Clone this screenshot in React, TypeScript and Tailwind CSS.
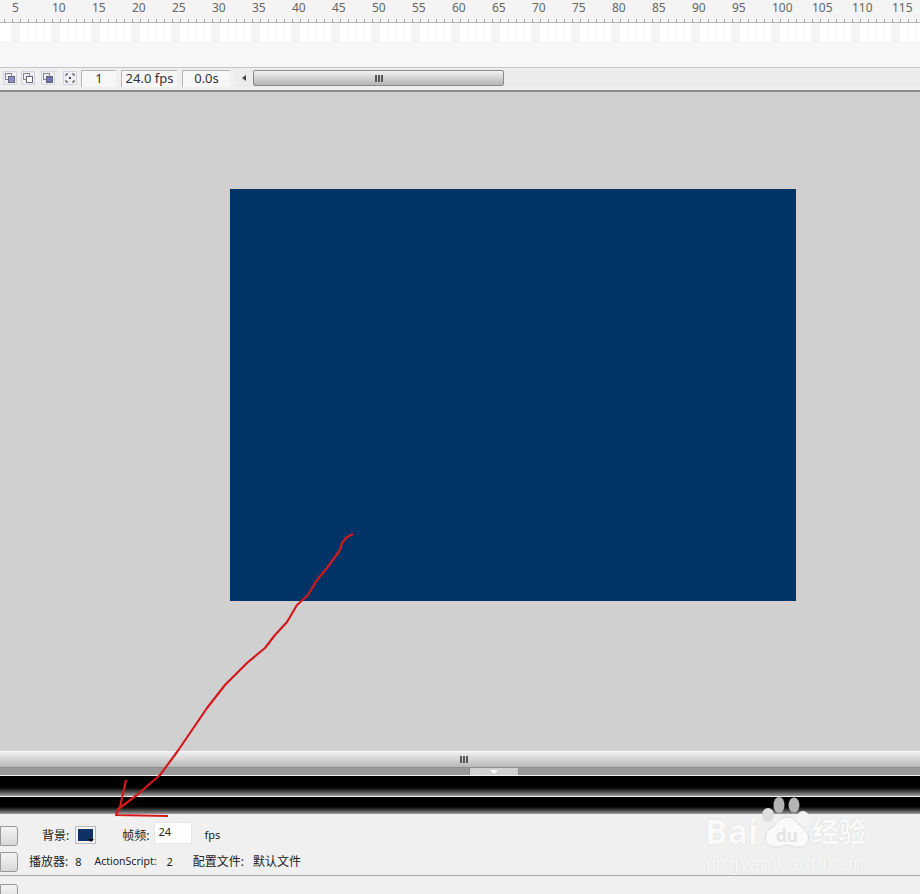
const labels = Array.from({ length: 23 }, (_, i) => (i + 1) * 5);
const cells = Array.from({ length: 115 }, (_, i) => i);
const uiFont = { fontFamily: '"Noto Sans", "Noto Sans CJK SC", sans-serif' };

const Arrow = () => (
  <svg className="absolute left-0 top-0 pointer-events-none" width="920" height="894" fill="none">
    <path
      d="M353 534 L347 537 L342 543 L340 550 L327 568 L317 580 L308 595 L297 605 L287 622 L275 635 L265 648 L247 663 L225 685 L207 708 L190 733 L177 752 L160 775 L137 795 L117 810"
      stroke="#d4181c"
      strokeWidth="2.2"
      strokeLinejoin="round"
    />
    <path d="M126 780 L120 807 L116 815 L168 816" stroke="#d4181c" strokeWidth="2.2" strokeLinejoin="round" />
  </svg>
);

const Watermark = () => (
  <div className="absolute left-[704px] top-[796px] w-[170px] h-[80px] pointer-events-none">
    <svg className="absolute left-[50px] top-0" width="70" height="58">
      <ellipse cx="25" cy="9" rx="5.5" ry="8" fill="#b4b4b4" />
      <ellipse cx="40" cy="9" rx="5.5" ry="7.5" fill="#b4b4b4" />
      <ellipse cx="14" cy="19" rx="6" ry="7" fill="#dedede" />
      <ellipse cx="49" cy="22" rx="6" ry="7" fill="#f4f4f4" />
      <path
        d="M33 21 C25 21 22 29 16 33 C9 38 10 51 21 51 C27 51 29 49 33 49 C37 49 39 51 46 51 C56 51 57 38 50 33 C44 29 41 21 33 21 Z"
        fill="#fafafa"
        stroke="#dcdcdc"
      />
    </svg>
    <span className="absolute left-[1px] top-[17px] text-[34px] leading-[36px] font-bold text-[#fafafa] [text-shadow:0_0_1px_#c4c4c4]" style={uiFont}>
      Bai
    </span>
    <span className="absolute left-[72px] top-[30px] text-[17px] leading-[20px] font-bold text-[#e4e4e4]" style={uiFont}>
      du
    </span>
    <span className="absolute left-[108px] top-[20px] text-[27px] leading-[32px] font-bold text-[#fafafa] [text-shadow:0_0_1px_#c4c4c4]" style={uiFont}>
      经验
    </span>
    <span className="absolute left-[2px] top-[55px] text-[19px] leading-[24px] text-[#fafafa] [text-shadow:0_0_1px_#c4c4c4]" style={uiFont}>
      jingyan.baidu.com
    </span>
  </div>
);

const OverlapIcon = ({ fill }: { fill: string }) => (
  <svg width="14" height="14">
    <rect x="0.5" y="0.5" width="13" height="13" fill="#eeeef4" stroke="#d4d4dc" />
    <rect x="2.5" y="2.5" width="6" height="6" fill="none" stroke="#888" />
    <rect x="5.5" y="5.5" width="6" height="6" fill={fill} stroke="#667" />
  </svg>
);

const Grip = () => (
  <div className="flex gap-px">
    <span className="w-[2px] h-[7px] bg-[#555]" />
    <span className="w-[2px] h-[7px] bg-[#555]" />
    <span className="w-[2px] h-[7px] bg-[#555]" />
  </div>
);

const ReadOut = ({ w, ml, children }: { w: string; ml: string; children: string }) => (
  <div className={`${w} ${ml} h-[17px] flex items-center justify-center bg-[#f7f7f7] border-l border-t border-[#b5b5b5] text-[13px] text-[#333]`}>
    {children}
  </div>
);

const SideButton = () => (
  <div className="w-[18px] h-[20px] border border-[#999] rounded-r-[3px] bg-gradient-to-b from-[#f4f4f4] to-[#d8d8d8]" />
);

export default function App() {
  return (
    <div className="relative w-[920px] h-[894px] overflow-hidden flex flex-col bg-[#f0f0f0]" style={uiFont}>
      {/* timeline ruler */}
      <div className="h-[18px] flex bg-[#f4f4f4] text-[12px] leading-[18px] text-[#666] shrink-0">
        {labels.map((n) => (
          <span key={n} className="w-[40px] shrink-0 pl-3 -mt-[1px]">
            {n}
          </span>
        ))}
      </div>
      <div className="h-[5px] flex pl-1 bg-[#f4f4f4] border-b border-[#b4b4b4] shrink-0">
        {cells.map((i) => (
          <span key={i} className="w-[8px] shrink-0 border-l border-[#aaa] h-[3px] mt-[1px]" />
        ))}
      </div>
      <div className="h-[20px] flex pl-1 bg-white border-b border-[#f2f2f2] shrink-0">
        {cells.map((i) => (
          <span
            key={i}
            className={i % 5 === 1 ? "w-[8px] shrink-0 bg-[#f5f5f5]" : "w-[8px] shrink-0 border-r border-[#f5f5f5]"}
          />
        ))}
      </div>
      <div className="h-[24px] bg-[#f7f7f7] shrink-0" />

      {/* timeline toolbar */}
      <div className="h-[25px] flex items-center pl-[3px] pb-[2px] bg-[#f0f0f0] border-t border-[#c4c4c4] border-b-2 border-b-[#8a8a8a] shrink-0">
        <OverlapIcon fill="#8f8fc8" />
        <div className="ml-[4px]">
          <OverlapIcon fill="#ffffff" />
        </div>
        <div className="ml-[6px]">
          <OverlapIcon fill="#6f6fb8" />
        </div>
        <svg className="ml-[8px]" width="14" height="14" fill="none" stroke="#444">
          <rect x="0.5" y="0.5" width="13" height="13" fill="#eeeef4" stroke="#d4d4dc" />
          <path d="M5 3H3V5M9 3h2V5M3 9v2h2M11 9v2H9" />
          <rect x="6" y="6" width="2" height="2" fill="#444" stroke="none" />
        </svg>
        <ReadOut w="w-[35px]" ml="ml-[4px]">1</ReadOut>
        <ReadOut w="w-[56px]" ml="ml-[5px]">24.0 fps</ReadOut>
        <ReadOut w="w-[48px]" ml="ml-[5px]">0.0s</ReadOut>
        <div className="ml-[5px] flex-1 h-[18px] flex items-center bg-[#ececec]">
          <div className="w-[18px] flex justify-center">
            <span className="w-0 h-0 border-y-[3px] border-y-transparent border-r-[4px] border-r-[#444]" />
          </div>
          <div className="w-[251px] h-[16px] flex items-center justify-center rounded-[2px] border border-[#8c8c8c] bg-gradient-to-b from-[#f2f2f2] to-[#b4b4b4]">
            <Grip />
          </div>
        </div>
      </div>

      {/* stage */}
      <div className="h-[659px] bg-[#d0d0d0] pl-[230px] pt-[97px] shrink-0">
        <div className="w-[566px] h-[412px] bg-[#003366]" />
      </div>

      {/* horizontal scroll */}
      <div className="h-[17px] flex items-center justify-center border-t border-[#f7f7f7] border-b border-b-[#8f8f8f] bg-gradient-to-b from-[#f0f0f0] to-[#b8b8b8] shrink-0">
        <div className="ml-[7px]">
          <Grip />
        </div>
      </div>
      <div className="h-[7px] pl-[469px] bg-[#9a9a9a] shrink-0">
        <div className="w-[50px] h-[7px] flex justify-center pt-[2px] bg-[#cfcfcf] border-x border-[#8a8a8a]">
          <span className="w-0 h-0 border-x-[4px] border-x-transparent border-t-[4px] border-t-white" />
        </div>
      </div>
      <div className="h-[21px] bg-gradient-to-b from-black from-50% to-[#a0a0a0] border-t border-[#f0f0f0] shrink-0" />
      <div className="h-[18px] bg-gradient-to-b from-black from-50% to-[#a0a0a0] border-t border-[#f0f0f0] shrink-0" />

      {/* properties panel */}
      <div className="h-[62px] border-b border-[#a8a8a8] text-[12px] text-[#222] shrink-0">
        <div className="h-[38px] flex items-center">
          <div className="mt-[5px]">
            <SideButton />
          </div>
          <span className="ml-[24px] mt-[5px]">背景:</span>
          <div className="ml-[6px] w-[21px] h-[18px] relative border border-[#bbb] bg-[#f4f4f4] p-[2px] mt-[3px]">
            <div className="w-full h-full bg-[#0f3266]" />
            <span className="absolute right-[1px] bottom-[1px] w-0 h-0 border-x-[3px] border-x-transparent border-t-[3px] border-t-black" />
          </div>
          <span className="ml-[26px] mt-[5px]">帧频:</span>
          <div className="ml-[5px] w-[38px] h-[22px] bg-white border border-[#e6e6e6] pl-[3px] text-[11px] leading-[17px]">
            24
          </div>
          <span className="ml-[12px] mt-[5px] text-[11px]">fps</span>
        </div>
        <div className="h-[20px] flex items-center">
          <SideButton />
          <span className="ml-[11px]">播放器:</span>
          <span className="ml-[7px] text-[11px]">8</span>
          <span className="ml-[13px] text-[10.5px]">ActionScript:</span>
          <span className="ml-[10px] text-[11px]">2</span>
          <span className="ml-[20px]">配置文件:</span>
          <span className="ml-[9px]">默认文件</span>
        </div>
      </div>
      <div className="flex-1 pt-[8px]">
        <SideButton />
      </div>

      <Watermark />
      <Arrow />
    </div>
  );
}
